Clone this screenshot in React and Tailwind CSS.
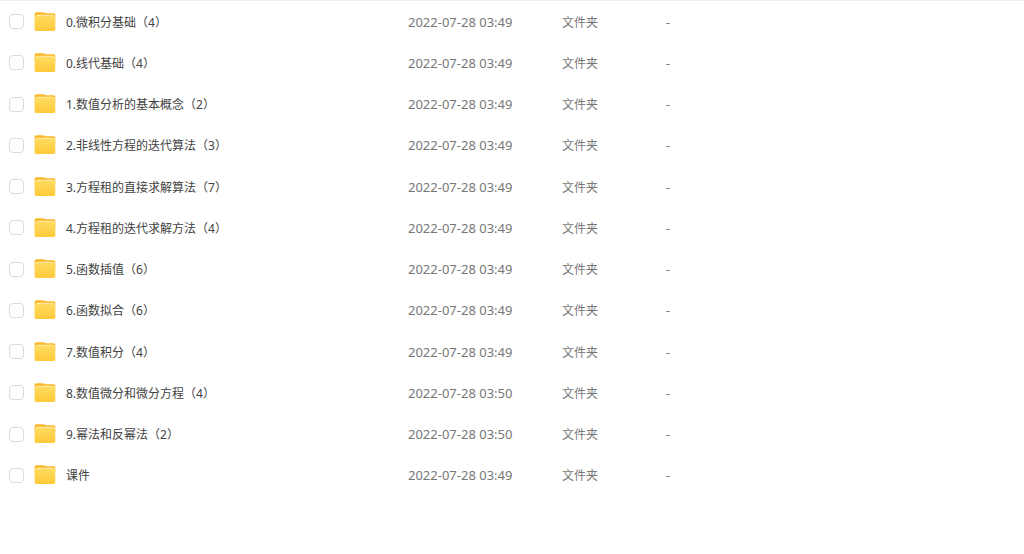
const files = [
  { name: "0.微积分基础（4）", date: "2022-07-28 03:49" },
  { name: "0.线代基础（4）", date: "2022-07-28 03:49" },
  { name: "1.数值分析的基本概念（2）", date: "2022-07-28 03:49" },
  { name: "2.非线性方程的迭代算法（3）", date: "2022-07-28 03:49" },
  { name: "3.方程租的直接求解算法（7）", date: "2022-07-28 03:49" },
  { name: "4.方程租的迭代求解方法（4）", date: "2022-07-28 03:49" },
  { name: "5.函数插值（6）", date: "2022-07-28 03:49" },
  { name: "6.函数拟合（6）", date: "2022-07-28 03:49" },
  { name: "7.数值积分（4）", date: "2022-07-28 03:49" },
  { name: "8.数值微分和微分方程（4）", date: "2022-07-28 03:50" },
  { name: "9.幂法和反幂法（2）", date: "2022-07-28 03:50" },
  { name: "课件", date: "2022-07-28 03:49" },
];

function FolderIcon() {
  return (
    <svg
      xmlns="http://www.w3.org/2000/svg"
      className="h-5 w-[22px] shrink-0"
      viewBox="0 0 22 20"
      aria-hidden="true"
    >
      <defs>
        <linearGradient id="folder-front" x1="0" y1="0" x2="0" y2="1">
          <stop offset="0" stopColor="#ffdc62" />
          <stop offset="1" stopColor="#ffc93a" />
        </linearGradient>
      </defs>
      <path
        d="M0.6 2.4C0.6 1.2 1.3 0.3 2.5 0.3H9.3C10 0.3 10.5 0.5 11 0.9L11.6 1.3H19.4C20.7 1.3 21.3 2 21.3 3.1V8H0.6Z"
        fill="#fcb62b"
      />
      <path
        d="M0.6 6C0.9 3.8 1.7 2.8 3 2.8H19C20.3 2.8 21 3.8 21.3 6V17C21.3 18.4 20.6 19.1 19.3 19.1H2.6C1.3 19.1 0.6 18.4 0.6 17Z"
        fill="url(#folder-front)"
      />
      <path
        d="M1.5 5.4C1.8 4 2.3 3.4 3.3 3.4H18.7C19.7 3.4 20.2 4 20.5 5.4"
        fill="none"
        stroke="#ffeaa4"
        strokeWidth="1"
      />
    </svg>
  );
}

function FileRow({ file, id }) {
  return (
    <tr>
      <td className="p-0 pl-[9px] align-middle">
        <div className="flex items-center">
          <input
            id={id}
            type="checkbox"
            className="h-[15px] w-[15px] shrink-0 cursor-pointer appearance-none rounded-[4px] border border-[#d8dade] bg-white checked:border-[#06a7ff] checked:bg-[#06a7ff]"
          />
          <span className="ml-[10px] flex">
            <FolderIcon />
          </span>
          <label
            htmlFor={id}
            className="ml-[10px] cursor-pointer pt-0.5 whitespace-nowrap text-[#424242]"
          >
            {file.name}
          </label>
        </div>
      </td>
      <td className="p-0 align-middle text-[13px] whitespace-nowrap">
        {file.date}
      </td>
      <td className="p-0 pt-0.5 align-middle whitespace-nowrap">文件夹</td>
      <td className="p-0 align-middle text-[13px]">-</td>
    </tr>
  );
}

export default function App() {
  return (
    <main className="min-h-screen border-t border-[#eeeeee] bg-white font-['Noto_Sans','Noto_Sans_CJK_SC',sans-serif]">
      <table
        aria-label="文件列表"
        className="h-[495px] w-full table-fixed border-collapse text-[12px] leading-5 text-[#777777]"
      >
        <colgroup>
          <col className="w-[408px]" />
          <col className="w-[154px]" />
          <col className="w-[104px]" />
          <col />
        </colgroup>
        <tbody>
          {files.map((file, index) => (
            <FileRow key={file.name} file={file} id={`file-${index}`} />
          ))}
        </tbody>
      </table>
    </main>
  );
}
